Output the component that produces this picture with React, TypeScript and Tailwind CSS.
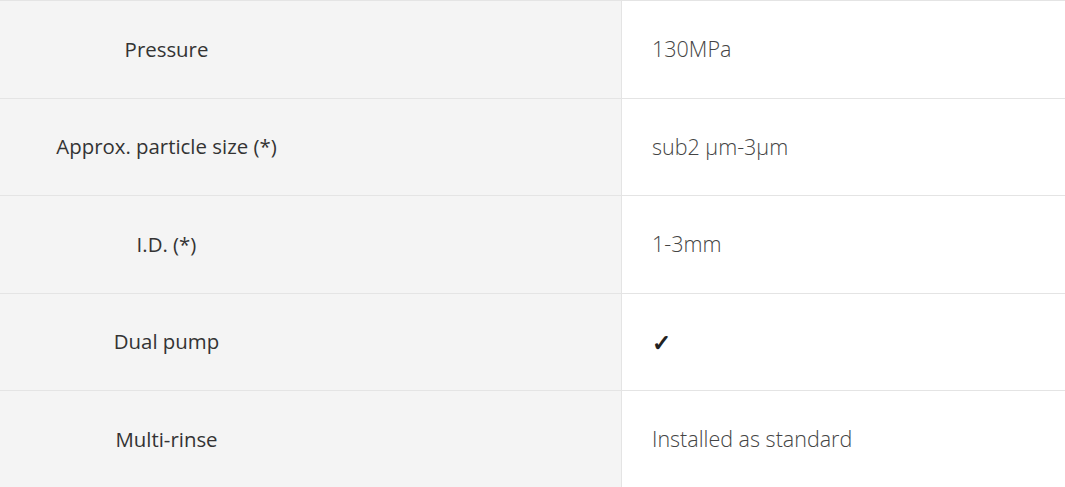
import React from "react";

const rows: { label: string; value: string }[] = [
  { label: "Pressure", value: "130MPa" },
  { label: "Approx. particle size (*)", value: "sub2 μm-3μm" },
  { label: "I.D. (*)", value: "1-3mm" },
  { label: "Dual pump", value: "✓" },
  { label: "Multi-rinse", value: "Installed as standard" },
];

export default function App() {
  return (
    <div
      className="w-[1065px] h-[487px] overflow-hidden bg-white"
      style={{ fontFamily: '"Open Sans", "Liberation Sans", sans-serif' }}
    >
      <div className="flex flex-col">
        {rows.map((r, i) => (
          <div key={i} className="flex h-[97.5px] border-t border-[#e4e4e4]">
            <div className="w-[622px] shrink-0 bg-[#f4f4f4] border-r border-[#e4e4e4] flex items-center">
              <div className="w-[333px] text-center text-[20.4px] text-[#333333]">{r.label}</div>
            </div>
            <div className="flex-1 flex items-center pl-[30px] text-[21.5px] font-light text-[#444444]">
              {r.value === "✓" ? (
                <span className="text-[#222222] text-[23px] font-semibold">✓</span>
              ) : (
                r.value
              )}
            </div>
          </div>
        ))}
      </div>
    </div>
  );
}
